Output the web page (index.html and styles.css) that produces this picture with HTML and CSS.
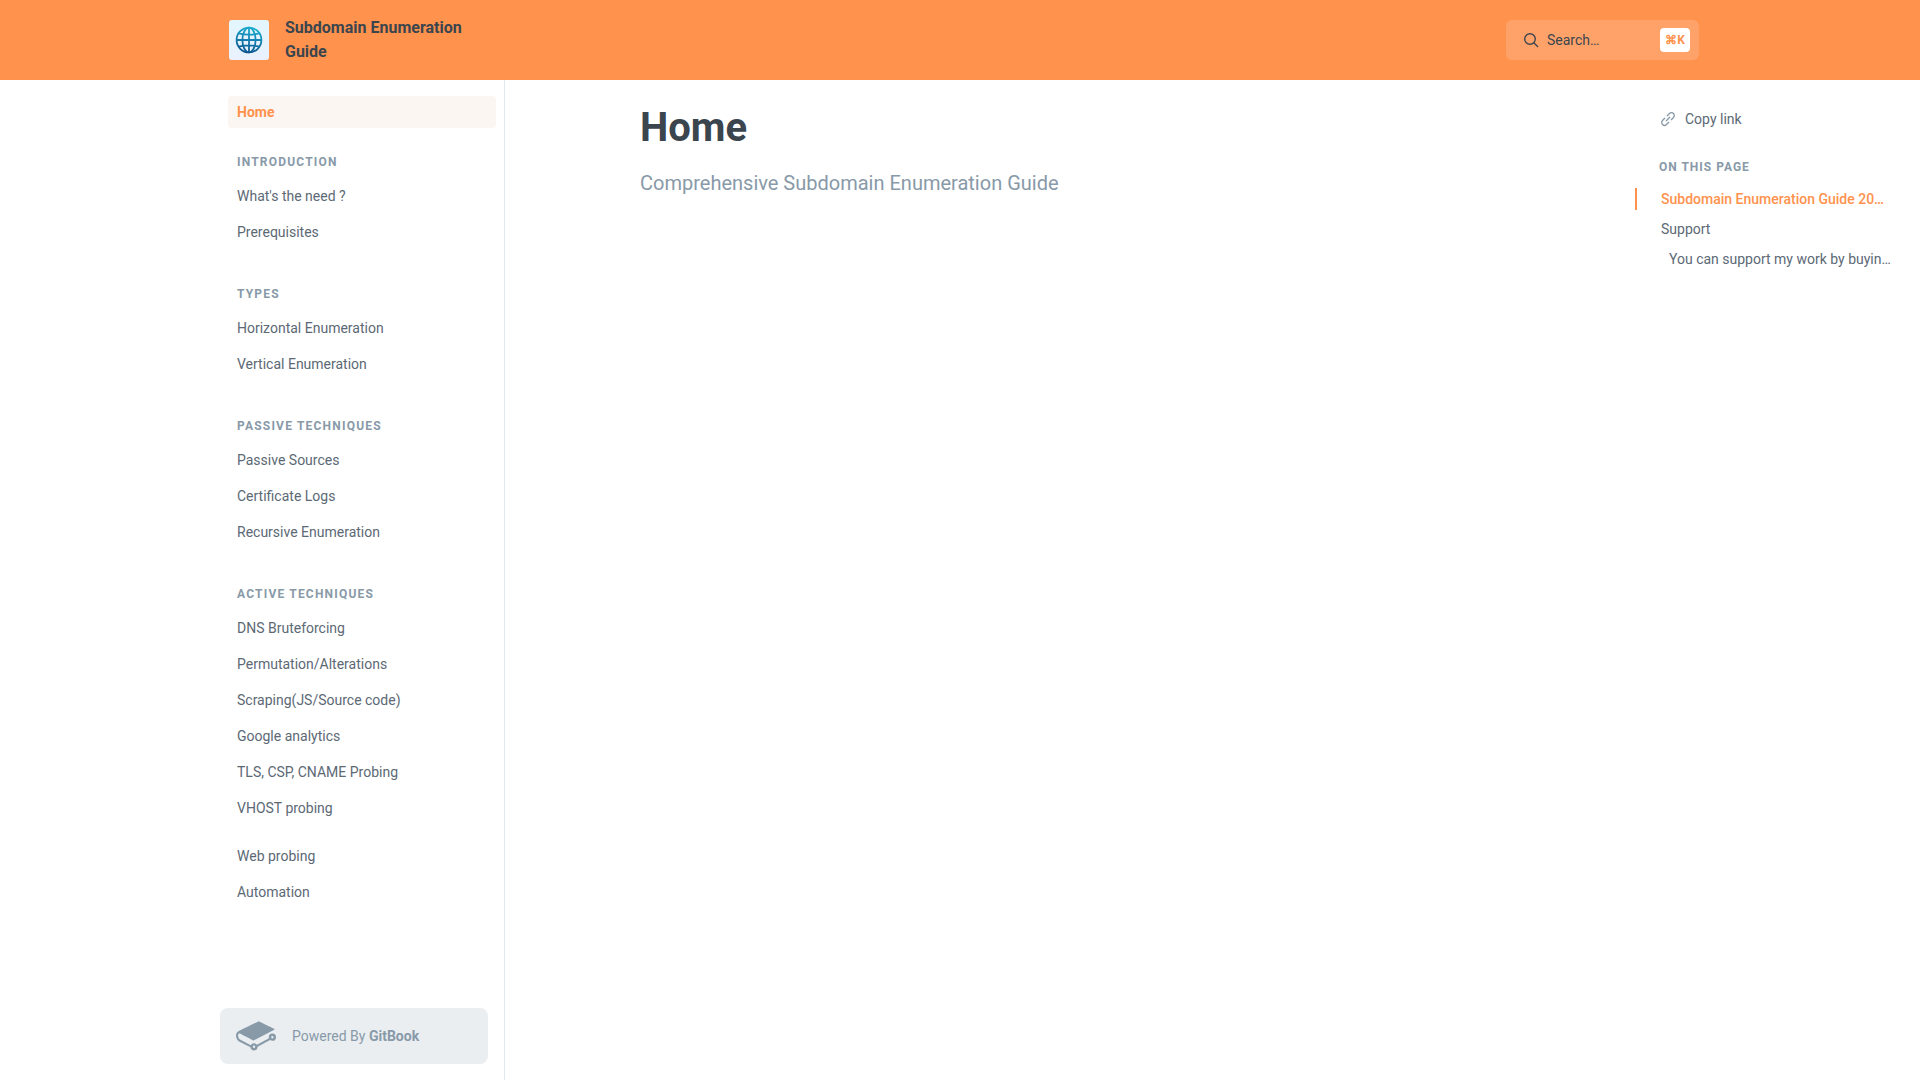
FILE: index.html
```html
<!DOCTYPE html>
<html lang="en">
<head>
  <meta charset="utf-8">
  <meta name="viewport" content="width=device-width, initial-scale=1">
  <title>Home - Subdomain Enumeration Guide</title>
  <link rel="stylesheet" href="styles.css">
</head>
<body>
  <header class="header">
    <div class="header-inner">
      <a class="brand" href="#">
        <svg class="brand-logo" viewBox="0 0 40 40" aria-hidden="true">
          <defs>
            <linearGradient id="tile" x1="0" y1="0" x2="0" y2="1">
              <stop offset="0" stop-color="#e2f6fd"/>
              <stop offset="1" stop-color="#eaf1fe"/>
            </linearGradient>
            <linearGradient id="globe" gradientUnits="userSpaceOnUse" x1="24" y1="7" x2="18" y2="33">
              <stop offset="0" stop-color="#1cb0d0"/>
              <stop offset="0.5" stop-color="#1580b0"/>
              <stop offset="1" stop-color="#0c5590"/>
            </linearGradient>
          </defs>
          <rect width="40" height="40" rx="3" fill="url(#tile)"/>
          <g fill="none" stroke="url(#globe)" stroke-width="1.8">
            <circle cx="20" cy="20" r="12.4"/>
            <ellipse cx="20" cy="20" rx="6.6" ry="12.4"/>
            <path d="M20 7.6Q20.02 20 20 32.4M7.6 20Q20 20.02 32.4 20M9.6 13.4Q20 16 30.4 13.4M9.6 26.6Q20 24 30.4 26.6"/>
          </g>
        </svg>
        <span class="brand-name">Subdomain Enumeration Guide</span>
      </a>
      <button class="search" type="button">
        <svg class="search-icon" viewBox="0 0 16 16" aria-hidden="true">
          <circle cx="7" cy="7" r="5.3"/>
          <path d="M11 11l3.6 3.4"/>
        </svg>
        <span class="search-label">Search…</span>
        <kbd class="search-key">⌘K</kbd>
      </button>
    </div>
  </header>

  <div class="layout">
    <aside class="sidebar">
      <nav class="nav" aria-label="Pages">
        <a class="nav-link nav-link-active" href="#">Home</a>
        <section class="nav-section">
          <h2 class="label nav-heading">INTRODUCTION</h2>
          <div class="nav-list">
            <a class="nav-link" href="#">What's the need ?</a>
            <a class="nav-link" href="#">Prerequisites</a>
          </div>
        </section>
        <section class="nav-section">
          <h2 class="label nav-heading">TYPES</h2>
          <div class="nav-list">
            <a class="nav-link" href="#">Horizontal Enumeration</a>
            <a class="nav-link" href="#">Vertical Enumeration</a>
          </div>
        </section>
        <section class="nav-section">
          <h2 class="label nav-heading">PASSIVE TECHNIQUES</h2>
          <div class="nav-list">
            <a class="nav-link" href="#">Passive Sources</a>
            <a class="nav-link" href="#">Certificate Logs</a>
            <a class="nav-link" href="#">Recursive Enumeration</a>
          </div>
        </section>
        <section class="nav-section">
          <h2 class="label nav-heading">ACTIVE TECHNIQUES</h2>
          <div class="nav-list">
            <a class="nav-link" href="#">DNS Bruteforcing</a>
            <a class="nav-link" href="#">Permutation/Alterations</a>
            <a class="nav-link" href="#">Scraping(JS/Source code)</a>
            <a class="nav-link" href="#">Google analytics</a>
            <a class="nav-link" href="#">TLS, CSP, CNAME Probing</a>
            <a class="nav-link" href="#">VHOST probing</a>
          </div>
        </section>
        <div class="nav-list nav-tail">
          <a class="nav-link" href="#">Web probing</a>
          <a class="nav-link" href="#">Automation</a>
        </div>
      </nav>
      <a class="powered" href="#">
        <svg class="powered-logo" viewBox="0 0 24 24" aria-hidden="true">
          <path d="M10.802 17.77a.703.703 0 11-.002 1.406.703.703 0 01.002-1.406m11.024-4.347a.703.703 0 11.001-1.406.703.703 0 01-.001 1.406m0-2.876a2.176 2.176 0 00-2.174 2.174c0 .233.039.465.115.691l-7.181 3.823a2.165 2.165 0 00-1.784-.937c-.829 0-1.584.475-1.95 1.216l-6.451-3.402c-.682-.358-1.192-1.48-1.138-2.502.028-.533.212-.947.493-1.107.178-.1.392-.092.62.027l.042.023c1.71.9 7.304 3.847 7.54 3.956.363.169.565.237 1.185-.057l11.564-6.014c.17-.064.368-.227.368-.474 0-.342-.354-.477-.355-.477-.658-.315-1.669-.788-2.655-1.25-2.108-.987-4.497-2.105-5.546-2.655-.906-.474-1.635-.074-1.765.006l-.252.125C7.78 6.048 1.46 9.178 1.1 9.397.457 9.789.058 10.57.006 11.539c-.08 1.537.703 3.14 1.824 3.727l6.822 3.518a2.175 2.175 0 002.15 1.862 2.177 2.177 0 002.173-2.14l7.514-4.073c.38.298.853.461 1.337.461A2.176 2.176 0 0024 12.72a2.176 2.176 0 00-2.174-2.174"/>
        </svg>
        <span>Powered By <strong>GitBook</strong></span>
      </a>
    </aside>

    <main class="content">
      <h1 class="title">Home</h1>
      <p class="subtitle">Comprehensive Subdomain Enumeration Guide</p>
    </main>

    <aside class="toc">
      <button class="copy" type="button">
        <svg class="copy-icon" viewBox="0 0 24 24" aria-hidden="true">
          <path d="M9.5 14.5l5-5M11 7l3.2-3.2a4.2 4.2 0 0 1 6 6L17 13M13 17l-3.2 3.2a4.2 4.2 0 0 1-6-6L7 11"/>
        </svg>
        Copy link
      </button>
      <h2 class="label toc-heading">ON THIS PAGE</h2>
      <nav class="toc-list" aria-label="On this page">
        <a class="toc-link toc-link-active" href="#">Subdomain Enumeration Guide 20…</a>
        <a class="toc-link" href="#">Support</a>
        <a class="toc-link toc-link-nested" href="#">You can support my work by buyin…</a>
      </nav>
    </aside>
  </div>
</body>
</html>
```
FILE: styles.css
```css
:root {
  --accent: #ff924d;
  --text: #3b454e;
  --text-soft: #5c6975;
  --muted: #8899a8;
  --line: #e3e8ed;
  --gutter: max(16px, calc(50vw - 740px));
}

* {
  box-sizing: border-box;
}

body {
  display: flex;
  flex-direction: column;
  min-height: 100vh;
  margin: 0;
  background: #fff;
  color: var(--text-soft);
  font-family: Roboto, "Liberation Sans", sans-serif;
  font-size: 14px;
  line-height: 20px;
}

a {
  color: inherit;
  text-decoration: none;
}

button {
  border: 0;
  font: inherit;
  cursor: pointer;
}

h1,
h2,
p {
  margin: 0;
}

.header {
  background: var(--accent);
}

.header-inner {
  display: flex;
  align-items: center;
  justify-content: space-between;
  min-height: 80px;
  padding: 16px calc(var(--gutter) + 1px);
}

.brand {
  display: flex;
  align-items: center;
  gap: 16px;
  width: 268px;
  padding-left: 8px;
  color: var(--text);
  font-size: 16px;
  font-weight: 700;
  line-height: 24px;
}

.brand-logo {
  flex: none;
  width: 40px;
  height: 40px;
}

.search {
  display: flex;
  align-items: center;
  gap: 8px;
  width: 193px;
  height: 40px;
  padding: 0 9px 0 17px;
  border-radius: 6px;
  background: #ffa26a;
  color: var(--text);
}

.search-icon {
  width: 16px;
  height: 16px;
  fill: none;
  stroke: currentColor;
  stroke-width: 1.4;
  stroke-linecap: round;
}

.search-label {
  flex: 1;
  text-align: left;
}

.search-key {
  width: 30px;
  border-radius: 4px;
  background: #fff;
  color: var(--accent);
  font-family: inherit;
  font-size: 12px;
  font-weight: 700;
  line-height: 24px;
}

.layout {
  display: flex;
  flex: 1;
  padding-left: var(--gutter);
}

.sidebar {
  display: flex;
  flex: none;
  flex-direction: column;
  justify-content: space-between;
  gap: 16px;
  width: 285px;
  padding: 16px 16px 16px 0;
  border-right: 1px solid var(--line);
}

.nav {
  display: flex;
  flex-direction: column;
  margin: 0 -8px 0 8px;
}

.nav-section {
  padding: 26px 0 12px;
}

.label {
  color: var(--muted);
  font-size: 12px;
  font-weight: 700;
  line-height: 16px;
}

.nav-heading {
  margin-bottom: 10px;
  padding-left: 9px;
  letter-spacing: 1.2px;
}

.nav-list {
  display: flex;
  flex-direction: column;
  gap: 4px;
}

.nav-tail {
  padding-top: 4px;
}

.nav-link {
  padding: 6px 9px;
  border-radius: 4px;
}

.nav-link-active {
  background: #fcf6f2;
  color: var(--accent);
  font-weight: 700;
}

.powered {
  display: flex;
  align-items: center;
  gap: 16px;
  height: 56px;
  padding: 0 16px;
  border-radius: 8px;
  background: #eaeef1;
  color: var(--muted);
}

.powered-logo {
  width: 40px;
  height: 40px;
  fill: currentColor;
}

.content {
  flex: 1;
  max-width: 860px;
  margin: 0 auto;
  padding: 24px 0;
}

.title {
  margin-bottom: 16px;
  color: var(--text);
  font-size: 40px;
  font-weight: 700;
  line-height: 48px;
}

.subtitle {
  color: var(--muted);
  font-size: 20px;
  line-height: 30px;
}

.toc {
  flex: none;
  width: 285px;
  padding: 29px 27px 24px 0;
}

.copy {
  display: flex;
  align-items: center;
  gap: 9px;
  padding: 0 0 0 25px;
  background: none;
  color: inherit;
}

.copy-icon {
  width: 16px;
  height: 16px;
  fill: none;
  stroke: var(--muted);
  stroke-width: 2;
  stroke-linecap: round;
}

.toc-heading {
  margin: 30px 0 13px;
  padding-left: 24px;
  letter-spacing: 1px;
}

.toc-list {
  display: flex;
  flex-direction: column;
  gap: 8px;
}

.toc-link {
  overflow: hidden;
  padding-left: 24px;
  border-left: 2px solid transparent;
  line-height: 22px;
  text-overflow: ellipsis;
  white-space: nowrap;
}

.toc-link-active {
  border-color: var(--accent);
  color: var(--accent);
  font-weight: 500;
}

.toc-link-nested {
  padding-left: 32px;
}
```
